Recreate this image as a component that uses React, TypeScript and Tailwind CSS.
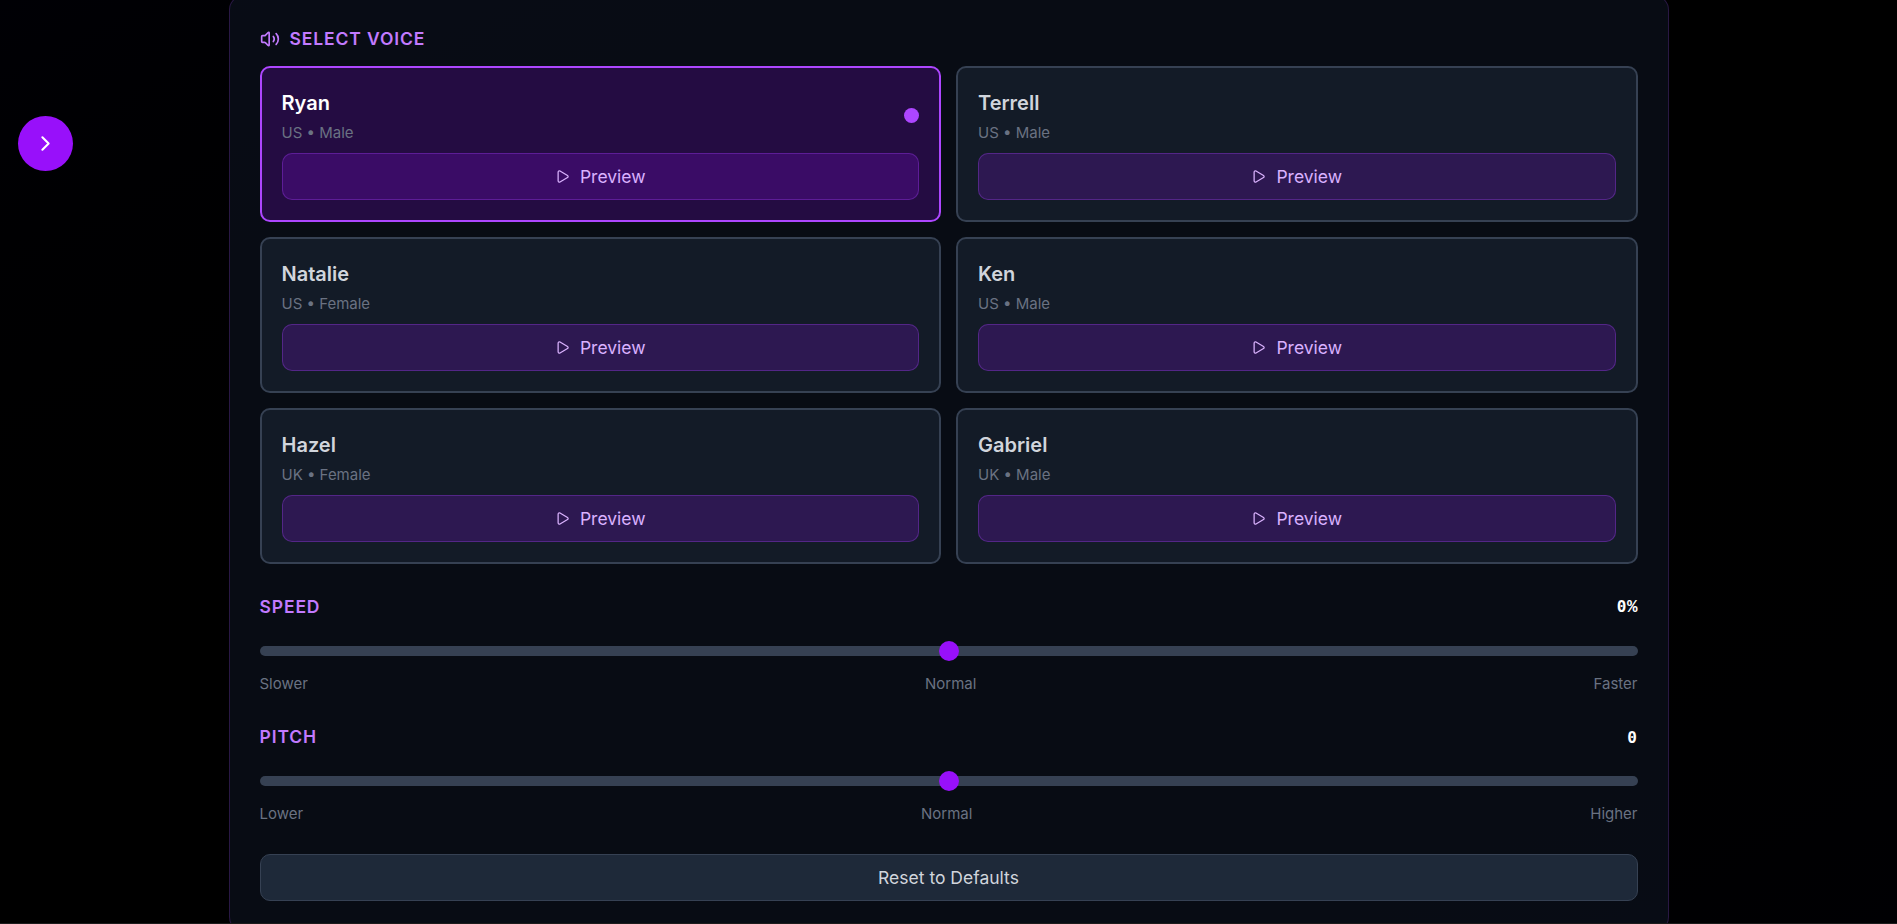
import React, { useState } from "react";
import { ChevronRight, Play, Volume2 } from "lucide-react";

const voices = [
  { name: "Ryan", detail: "US • Male" },
  { name: "Terrell", detail: "US • Male" },
  { name: "Natalie", detail: "US • Female" },
  { name: "Ken", detail: "US • Male" },
  { name: "Hazel", detail: "UK • Female" },
  { name: "Gabriel", detail: "UK • Male" },
];

type VoiceCardProps = {
  name: string;
  detail: string;
  selected: boolean;
  onSelect: () => void;
};

function VoiceCard({ name, detail, selected, onSelect }: VoiceCardProps) {
  return (
    <div
      onClick={onSelect}
      className={`cursor-pointer rounded-[10px] border-2 p-5 ${
        selected ? "border-purple-500 bg-purple-600/20" : "border-gray-700 bg-gray-800/50"
      }`}
    >
      <div className="flex items-center justify-between">
        <div>
          <div className={`text-[20px] leading-[30px] font-semibold ${selected ? "text-white" : "text-gray-300"}`}>
            {name}
          </div>
          <div className="mt-[5px] text-[15px] leading-5 text-gray-500">{detail}</div>
        </div>
        {selected && <div className="size-[15px] rounded-full bg-purple-500" />}
      </div>
      <button className="mt-2.5 flex w-full items-center justify-center gap-2.5 rounded-[10px] border border-purple-500/30 bg-purple-600/20 py-2.5 text-[17.5px] leading-[25px] text-purple-300">
        <Play className="size-[15px]" />
        Preview
      </button>
    </div>
  );
}

type SliderProps = { label: string; amount: number; unit?: string; marks: string[] };

function Slider({ label, amount, unit, marks }: SliderProps) {
  return (
    <div>
      <div className="flex h-[25px] items-center justify-between text-[17.5px] leading-[25px]">
        <span className="font-semibold tracking-wider text-purple-400 uppercase">{label}</span>
        <span className="flex items-baseline pt-px font-['Liberation_Mono',monospace] font-bold text-white">
          <span className="font-['DejaVu_Sans_Mono',monospace] text-[16px] tracking-[0.5px]">{amount}</span>
          {unit}
        </span>
      </div>
      <div className="mt-[27px] flex h-2.5 items-center justify-center rounded-full bg-gray-700">
        <div className="size-5 shrink-0 rounded-full bg-purple-600" />
      </div>
      <div className="mt-[18px] flex justify-between text-[15px] leading-5 text-gray-500">
        {marks.map((m) => (
          <span key={m}>{m}</span>
        ))}
      </div>
    </div>
  );
}

export default function App() {
  const [selected, setSelected] = useState("Ryan");
  return (
    <div className="relative h-[924px] overflow-hidden bg-linear-to-br from-[#000005] via-black to-[#000003] font-[Inter,sans-serif]">
      <button className="absolute top-[116px] left-[18px] flex size-[55px] items-center justify-center rounded-full bg-purple-600 text-white">
        <ChevronRight className="size-[25px]" />
      </button>
      <main className="mx-auto -mt-[5px] flex w-[1440px] flex-col gap-[30px] rounded-[15px] border border-purple-500/20 bg-gray-900/50 p-[30px]">
        <section>
          <h2 className="mb-[15px] flex items-center gap-2.5 text-[17.5px] leading-[25px] font-semibold tracking-wider text-purple-400 uppercase">
            <Volume2 className="size-5" />
            Select Voice
          </h2>
          <div className="grid grid-cols-2 gap-[15px]">
            {voices.map((v) => (
              <VoiceCard key={v.name} {...v} selected={v.name === selected} onSelect={() => setSelected(v.name)} />
            ))}
          </div>
        </section>
        <Slider label="Speed" amount={0} unit="%" marks={["Slower", "Normal", "Faster"]} />
        <Slider label="Pitch" amount={0} marks={["Lower", "Normal", "Higher"]} />
        <button className="w-full rounded-[10px] border border-gray-700 bg-gray-800 py-2.5 text-[17.5px] leading-[25px] text-gray-300">
          Reset to Defaults
        </button>
      </main>
      <div className="absolute inset-x-0 bottom-0 h-px bg-[#1c1c1c]" />
    </div>
  );
}
